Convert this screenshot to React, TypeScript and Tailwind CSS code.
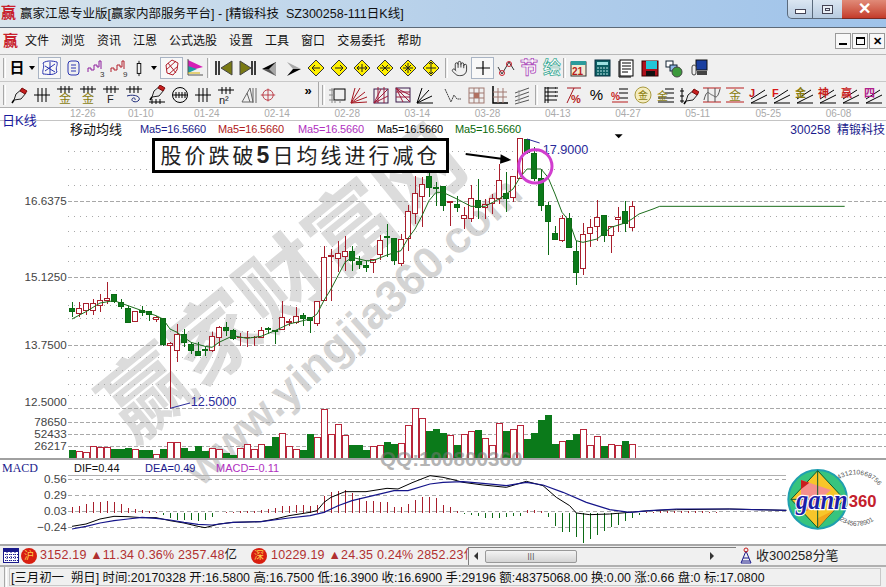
import React from 'react'
import { Hand } from 'lucide-react'

// [high, bodyTop, bodyBottom, low, isRed] in 3x picture coords
const candles: [number, number, number, number, number][] = [
  [518,538,546,565,0],[518,538,552,565,1],[522,524,545,558,1],[510,524,544,558,1],[495,515,528,548,1],[460,508,514,525,1],
  [495,497,517,522,0],[510,520,533,540,0],[530,538,580,582,0],[545,547,578,580,1],[532,545,550,560,0],[545,547,557,575,0],
  [560,566,572,580,1],[566,568,645,652,0],[640,644,650,838,1],[585,615,665,700,1],[600,616,640,655,0],[640,645,665,675,0],
  [638,667,680,680,0],[655,661,665,682,0],[610,622,663,670,1],[590,596,625,650,1],[580,595,605,620,0],[600,604,627,632,0],
  [612,624,626,650,1],[605,624,626,655,1],[620,624,626,652,1],[595,605,624,628,1],[595,597,602,615,0],[603,605,607,645,0],
  [516,566,600,602,1],[570,578,580,590,1],[535,563,580,585,1],[553,559,569,590,0],[565,565,575,612,0],[517,517,584,592,1],
  [352,386,514,516,1],[360,380,382,515,1],[335,374,388,430,1],[320,368,382,425,1],[350,368,395,425,0],[380,397,407,420,0],
  [395,410,415,428,0],[392,392,400,432,1],[318,334,376,392,1],[285,322,325,385,0],[328,328,393,408,0],[315,332,402,412,1],
  [228,247,328,365,1],[140,193,253,285,1],[145,167,202,295,1],[122,142,176,205,0],[160,175,177,232,0],[170,172,230,245,0],
  [215,217,220,290,1],[200,226,236,250,0],[235,260,268,300,1],[168,208,268,280,1],[150,214,236,270,0],[210,226,234,270,1],
  [195,208,224,255,1],[105,153,208,225,1],[130,193,207,250,0],[140,142,206,218,1],[28,28,148,150,1],[30,30,70,75,0],
  [55,72,148,155,0],[120,148,228,245,0],[220,228,278,378,0],[290,312,330,330,0],[258,268,335,338,1],[252,268,354,356,0],
  [335,366,430,468,0],[282,316,418,438,1],[270,296,314,355,1],[213,265,292,335,1],[258,258,320,338,0],[290,292,320,372,1],
  [235,265,272,310,1],[215,246,282,308,0],[215,232,296,305,1],
]

const volumes = [963,966,970,952,956,956,960,960,957,960,963,965,975,962,940,940,957,968,952,968,958,962,972,978,958,946,960,946,953,924,914,953,960,963,917,924,841,916,886,918,948,950,963,952,950,939,945,943,888,838,868,908,900,912,920,948,915,907,903,927,948,883,908,900,888,930,912,875,858,945,937,933,915,900,950,922,953,945,950,938,945]

const maLine = "216,570 258,548 300,522 342,515 384,530 426,545 468,560 489,570 510,600 531,610 552,625 573,640 615,652 636,655 657,640 699,620 741,628 783,622 825,605 867,585 930,570 951,555 972,514 993,480 1014,440 1035,400 1056,385 1098,395 1119,395 1161,378 1203,365 1224,328 1245,300 1266,260 1287,215 1308,190 1329,190 1371,210 1413,232 1455,232 1497,210 1539,180 1560,145 1581,120 1623,120 1644,145 1665,195 1686,250 1707,275 1728,335 1749,340 1791,330 1833,295 1875,282 1896,270 1917,255 1959,240 1979,232 2534,232"

const difLine = "216,232 258,225 300,210 342,202 384,203 426,206 468,206 510,215 552,222 594,232 615,236 657,225 699,220 741,219 783,218 825,210 867,200 930,190 951,185 972,160 993,145 1035,128 1098,128 1161,118 1194,120 1239,100 1290,80 1329,85 1359,92 1389,100 1449,108 1519,115 1579,97 1629,110 1669,145 1709,170 1729,192 1769,197 1829,195 1889,190 1949,185 2029,182 2189,180 2359,184"
const deaLine = "216,240 258,232 300,222 342,215 384,210 426,205 468,208 510,213 552,220 594,226 636,228 699,220 783,218 867,207 930,200 972,190 1014,170 1056,155 1119,140 1182,125 1224,125 1290,105 1329,100 1389,98 1449,103 1519,110 1579,100 1629,108 1689,130 1759,160 1829,182 1889,190 1949,185 2029,180 2189,180 2359,184"

// macd bars, bottom end or top end measured against the 191 zero line
const macdBars = [175,172,165,160,158,157,158,165,178,180,183,186,188,197,207,212,212,214,215,212,205,192,188,189,187,187,185,183,180,178,172,170,168,168,170,168,140,128,126,124,133,147,155,157,160,160,175,175,165,152,144,144,148,168,175,187,195,197,200,206,208,208,204,202,200,183,183,187,205,232,250,250,265,282,270,258,245,235,228,215,207,197,188,188,187,187,187,186,186,187,187,188,188]

const dashedY = [216,445,648,838,880,915,952]
const dottedY = [68,120,170,262,308,352,398,485,528,568,606,686,724,765,798]
const axis: [string, number][] = [['16.6375',216],['15.1250',445],['13.7500',648],['12.5000',820],['78650',880],['52433',915],['26217',952]]
const dates = ['01-10','01-24','02-14','02-28','03-14','03-28','04-13','04-27','05-11','05-25','06-08']
const menus = ['文件','浏览','资讯','江恩','公式选股','设置','工具','窗口','交易委托','帮助']

const Slot = ({ className = 'w-[23px]', sel, children }: { className?: string; sel?: boolean; children: React.ReactNode }) => (
  <div className={`${className} h-[22px] shrink-0 flex items-center justify-center ${sel ? 'bg-[#f8f8f8] border border-[#a9b4c4]' : ''}`}>
    {children}
  </div>
)

const Ico = ({ children }: { children: React.ReactNode }) => (
  <svg width="20" height="20" viewBox="0 0 20 20" fill="none" stroke="#000" strokeWidth="1">{children}</svg>
)

const Grip = ({ className = '' }: { className?: string }) => (
  <div className={`w-[3px] h-[20px] shrink-0 border-l border-[#a8a8a8] border-r border-r-white ${className}`} />
)

const Caret = () => <div className="w-0 h-0 border-x-[3px] border-x-transparent border-t-[4px] border-t-black" />

const Diamond = ({ d }: { d: string }) => (
  <Ico>
    <polygon points="10,2 18,10 10,18 2,10" fill="#fff000" stroke="#333" />
    <path d={d} stroke="#222" />
  </Ico>
)

const Comb = ({ y = 4, color = '#000' }: { y?: number; color?: string }) => (
  <path d={`M2 ${y}H18M6 ${y - 3}V${y + 4}M10 ${y - 3}V${y + 4}M14 ${y - 3}V${y + 4}`} stroke={color} />
)

const Fan = ({ color = '#000' }: { color?: string }) => (
  <path d="M2 18L18 18M2 18L17 11M2 18L14 5M2 18L7 3" stroke={color} />
)

const Angle = ({ label, color }: { label: string; color: string }) => (
  <Ico>
    <path d="M3 18H19M3 18L19 10M3 14L17 5" />
    <text x="1" y="12" fontSize="11" fontWeight="700" fill={color} stroke="none">{label}</text>
  </Ico>
)

const Pen = () => (
  <>
    <polygon points="5,15 7,9 13,4 17,8 12,14" fill="#e8e8e8" stroke="#222" />
    <polygon points="11,6 13,3 18,6 16,9" fill="#c81e1e" stroke="#7a0f0f" />
    <path d="M5 15L3 18" stroke="#000" strokeWidth="1.5" />
  </>
)

const row1 = (
  <>
    <Grip className="ml-[3px]" />
    <Slot className="w-[22px]"><span className="text-[15px] font-bold text-black">日</span></Slot>
    <Slot className="w-[8px]"><Caret /></Slot>
    <div className="w-[2px] shrink-0" />
    <Slot sel><Ico><path d="M3 5C7 2 13 3 17 4C18 8 15 9 17 14C13 18 7 16 3 16C2 12 5 9 3 5ZM5 8L15 14M15 6L5 13M10 4V16" stroke="#2a35b0" /></Ico></Slot>
    <Slot><Ico><rect x="5" y="3" width="11" height="14" rx="3" stroke="#2a35b0" /><path d="M8 7H13M8 10H13M8 13H13" stroke="#2a35b0" /></Ico></Slot>
    <Slot><Ico><path d="M2 14V10H5V12H8V7H11V9H13V3H15V11" stroke="#8e1f9e" /><text x="14" y="19" fontSize="8" fill="#333" stroke="none">3</text></Ico></Slot>
    <Slot><Ico><path d="M2 14V10H5V12H8V7H11V9H13V3H15V11" stroke="#b3202c" /><text x="14" y="19" fontSize="8" fill="#333" stroke="none">9</text></Ico></Slot>
    <Slot className="w-[18px]"><Ico><rect x="8" y="5" width="4" height="11" /><path d="M10 2V5M10 16V19" /></Ico></Slot>
    <Slot className="w-[12px]"><Caret /></Slot>
    <Slot sel><Ico><path d="M4 7L10 2L16 5L15 12L11 17L5 15ZM4 12L14 3M7 16L16 8M6 5L14 15" stroke="#b3202c" /></Ico></Slot>
    <Slot className="w-[24px]"><Ico><polygon points="3,2 18,9 3,13" fill="#d61fb5" stroke="none" /><polygon points="3,8 12,11 3,15" fill="#1c9ca0" stroke="none" /><path d="M3 1V17H18" stroke="#555" /><path d="M3 15H15" stroke="#d8b000" /></Ico></Slot>
    <Grip />
    <div className="w-[2px] shrink-0" />
    <Slot><Ico><path d="M2 3V17M5 3V17" strokeWidth="1.5" /><polygon points="18,3 7,10 18,17" fill="#7a7a14" stroke="#444" /></Ico></Slot>
    <Slot><Ico><polygon points="3,3 14,10 3,17" fill="#7a7a14" stroke="#444" /><path d="M15 3V17M18 3V17" strokeWidth="1.5" /></Ico></Slot>
    <Slot><Ico><polygon points="2,11 16,4 16,11" fill="#000" stroke="none" /><polygon points="2,11 16,11 16,18" fill="#555" stroke="none" /><polygon points="9,11 16,4 16,18" fill="#a8a8a8" stroke="none" /></Ico></Slot>
    <Slot><Ico><polygon points="18,11 4,4 10,11" fill="#a8a8a8" stroke="none" /><polygon points="18,11 4,18 10,11" fill="#000" stroke="none" /></Ico></Slot>
    <Slot><Diamond d="M14 10H6M9 7L6 10L9 13" /></Slot>
    <Slot><Diamond d="M6 10H14M11 7L14 10L11 13" /></Slot>
    <Slot><Diamond d="M5 10H15M7 8L5 10L7 12M13 8L15 10L13 12M10 6V14" /></Slot>
    <Slot><Diamond d="M5 10H15M7 7L10 10L7 13M13 7L10 10L13 13" /></Slot>
    <Slot><Diamond d="M5 10H15M10 5V15M7 7L13 13M13 7L7 13" /></Slot>
    <Slot><Diamond d="M10 4V16M8 6L10 4L12 6M8 14L10 16L12 14M5 10H15" /></Slot>
    <Grip className="ml-[3px]" />
    <Slot className="w-[23px]"><Hand size={17} strokeWidth={1.2} color="#222" /></Slot>
    <Slot sel><Ico><path d="M10 3V17M3 10H17" strokeWidth="1.2" /></Ico></Slot>
    <Slot><Ico><path d="M2 9L6 16L13 4L18 12" stroke="#333" /><circle cx="6" cy="15" r="2.5" stroke="#c81e2c" /><circle cx="13" cy="6" r="2.5" stroke="#c81e2c" /></Ico></Slot>
    <Slot><Ico><text x="1" y="16" fontSize="18" fontWeight="700" fill="#fff" stroke="#a12bb0" strokeWidth="0.7">节</text></Ico></Slot>
    <Slot><Ico><text x="1" y="16" fontSize="18" fontWeight="700" fill="#fff" stroke="#2fa58f" strokeWidth="0.7">绘</text></Ico></Slot>
    <Grip />
    <Slot className="w-[24px]"><Ico><rect x="3" y="4" width="15" height="14" fill="#f3ead2" stroke="#333" /><rect x="3" y="3" width="15" height="4" fill="#2b9b9b" stroke="none" /><text x="4" y="17" fontSize="10" fontWeight="700" fill="#b81c1c" stroke="none">21</text></Ico></Slot>
    <Slot className="w-[24px]"><Ico><rect x="3" y="2" width="15" height="16" fill="#0b5f63" stroke="#0a2e40" /><rect x="5" y="4" width="11" height="3" fill="#9ce0e0" stroke="none" /><path d="M5 10H16M5 13H16M5 16H16" stroke="#bfe8e8" strokeDasharray="2 1" /></Ico></Slot>
    <Slot className="w-[24px]"><Ico><rect x="4" y="2" width="13" height="16" fill="#fff" /><path d="M6 5H15M6 8H15M6 11H15M6 14H12" /><path d="M3 3V19H15" /></Ico></Slot>
    <Slot className="w-[24px]"><Ico><rect x="2" y="3" width="16" height="15" fill="#b0101c" stroke="#300" /><rect x="6" y="3" width="11" height="8" fill="#22c6d8" stroke="none" /><rect x="6" y="13" width="9" height="5" fill="#111" stroke="none" /></Ico></Slot>
    <Slot><Ico><rect x="2" y="3" width="7" height="6" fill="#fff" stroke="#123" /><rect x="6" y="7" width="7" height="6" fill="#8fb8e8" stroke="#123" /><circle cx="13" cy="14" r="5" fill="#3c9a3c" stroke="#444" /></Ico></Slot>
    <Slot className="w-[27px]"><Ico><rect x="7" y="2" width="11" height="10" fill="#1a3fa0" stroke="#111" /><rect x="3" y="7" width="4" height="10" rx="2" fill="#eee" stroke="#444" /><rect x="8" y="13" width="10" height="4" fill="#444" stroke="none" /></Ico></Slot>
  </>
)

const row2 = (
  <>
    <Grip className="ml-[3px]" />
    <div className="w-[1px] shrink-0" />
    <Slot><Ico><Pen /></Ico></Slot>
    <Slot><Ico><path d="M2 10H18M6 3V17M10 3V17M14 3V17" /></Ico></Slot>
    <Slot><Ico><Comb /><text x="4" y="18" fontSize="12" fill="#8a7d10" stroke="none">金</text></Ico></Slot>
    <Slot><Ico><Comb /><text x="4" y="18" fontSize="12" fill="#8a7d10" stroke="none">金</text></Ico></Slot>
    <Slot><Ico><Comb /><text x="6" y="18" fontSize="11" fill="#222" stroke="none">F</text></Ico></Slot>
    <Slot><Ico><Comb /><path d="M3 11C9 9 17 11 15 15C13 18 7 17 8 14C9 12 12 13 11 15" stroke="#1c2a7a" /></Ico></Slot>
    <Slot><Ico><g transform="translate(0 -3)"><Pen /></g><path d="M2 17H18M5 14V19M9 14V19M13 14V19" /></Ico></Slot>
    <Slot><Ico><circle cx="10" cy="10" r="7.5" /><path d="M3 10H17M6 7V13M9 7V13M12 7V13M15 7V13" /></Ico></Slot>
    <Slot><Ico><path d="M2 10H18M6 3V17M10 3V17M14 3V17" /></Ico></Slot>
    <Slot><Ico><Comb y={5} /><text x="3" y="19" fontSize="11" fill="#222" stroke="none">n²</text></Ico></Slot>
    <Slot><Ico><path d="M11 3L3 17H14ZM8 8L11 17M14 3V18M17 3V18" stroke="#666" /></Ico></Slot>
    <Slot className="w-[16px]"><Ico><circle cx="10" cy="10" r="6.5" stroke="#b3202c" /><path d="M1 10H19M10 2V18" stroke="#b3202c" /></Ico></Slot>
    <div className="w-[22px] shrink-0" />
    <Slot className="w-[20px]"><span className="text-[13px] font-bold text-black -mt-2">»</span></Slot>
    <div className="w-[4px] shrink-0 h-[26px] border-l border-[#a8a8a8]" />
    <Grip />
    <div className="w-[1px] shrink-0" />
    <Slot className="w-[22px]"><Ico><rect x="7" y="4" width="11" height="11" /><path d="M2 5H7M2 10H7M2 15H7M5 3V18M8 15V18M13 15V18" stroke="#888" /></Ico></Slot>
    <Slot className="w-[22px]"><Ico><path d="M2 18L18 17M2 18L18 12M2 18L16 7M2 18L11 3M2 18L6 3" stroke="#a51620" /></Ico></Slot>
    <Slot className="w-[22px]"><Ico><rect x="3" y="4" width="14" height="14" stroke="#3a1a4a" /><path d="M3 18L17 11M3 18L17 4M3 18L10 4M7 2V18M13 2V18" stroke="#9c1a3a" /></Ico></Slot>
    <Slot className="w-[22px]"><Ico><rect x="3" y="3" width="14" height="14" stroke="#3a1a4a" /><path d="M3 3L17 10M3 3L17 17M3 3L10 17M3 7H17M3 12H17" stroke="#9c1a3a" /></Ico></Slot>
    <Slot className="w-[22px]"><Ico><Fan /></Ico></Slot>
    <div className="w-[5px] shrink-0" />
    <Slot><Ico><path d="M2 4L8 17L11 10L14 14L18 14" stroke="#444" strokeDasharray="2 0.5" /></Ico></Slot>
    <Slot><Ico><rect x="3" y="3" width="15" height="15" stroke="#a07870" /><path d="M3 8H18M3 13H18M8 3V18M13 3V18" stroke="#a07870" /><rect x="8" y="8" width="5" height="5" fill="#b07060" stroke="none" /></Ico></Slot>
    <Slot><Ico><path d="M4 1V18H19M4 18" stroke="#000" strokeWidth="1.5" /><path d="M4 7H18M4 12H18M9 3V18M14 3V18" stroke="#a07870" /></Ico></Slot>
    <Slot><Ico><path d="M3 8L17 3M3 12L17 7M3 16L17 11M3 19L17 15" stroke="#555" /><path d="M7 5V18" stroke="#999" /></Ico></Slot>
    <div className="w-[2px] shrink-0" />
    <Grip />
    <div className="w-[1px] shrink-0" />
    <Slot><Ico><path d="M4 2V18M4 3H16M4 7H16M4 11H16M4 15H16M7 2V18" /><path d="M14 3H18M14 7H18M14 11H18" strokeDasharray="1 1" /></Ico></Slot>
    <Slot><Ico><path d="M3 3H17M10 3L3 18" stroke="#a51620" /><text x="7" y="18" fontSize="11" fontWeight="700" fill="#b81c1c" stroke="none">%</text></Ico></Slot>
    <Slot><span className="text-[15px] leading-none text-black">%</span></Slot>
    <Slot><Ico><path d="M9 4H18M9 8H18M9 13H18" /><path d="M2 17H18" stroke="#b81c1c" /><text x="1" y="15" fontSize="10" fontWeight="700" fill="#c81e1e" stroke="none">%</text></Ico></Slot>
    <Slot><Ico><circle cx="10" cy="10" r="8" fill="#f4ecc0" stroke="#a89a40" /><text x="5" y="14" fontSize="10" fill="#8a7d10" stroke="none">金</text></Ico></Slot>
    <Slot><Ico><path d="M9 4H18M9 8H18M2 13H18M2 17H18" /><text x="1" y="15" fontSize="11" fill="#8a7d10" stroke="none">金</text></Ico></Slot>
    <Slot><Ico><path d="M3 3V18M1 6H5M1 11H5M1 16H5" /><g transform="translate(2 1)"><Pen /></g></Ico></Slot>
    <Slot><Ico><path d="M1 3H19M1 17H19" stroke="#b81c1c" /><path d="M2 15C5 3 7 9 10 10C13 11 15 16 18 4M6 3V17M13 3V17" stroke="#555" /></Ico></Slot>
    <Slot><Ico><path d="M1 3H19M1 17H19" stroke="#b81c1c" /><text x="4" y="15" fontSize="12" fill="#8a7d10" stroke="none">金</text></Ico></Slot>
    <Slot><Angle label="J" color="#c81e1e" /></Slot>
    <Slot><Angle label="F" color="#d81818" /></Slot>
    <Slot><Angle label="金" color="#8a7d10" /></Slot>
    <Slot><Angle label="神" color="#c81e1e" /></Slot>
    <Slot><Angle label="赢" color="#c81e1e" /></Slot>
    <Slot><Angle label="四" color="#b0208a" /></Slot>
  </>
)

const GannLogo = () => (
  <svg className="absolute right-0 top-0 w-[110px] h-[85px]" viewBox="0 0 330 255">
    <defs>
      <path id="digitsTop" d="M180 66A88 88 0 0 1 326 118" />
      <path id="digitsBottom" d="M190 180A88 88 0 0 0 326 140" />
    </defs>
    <text fontSize="20" fill="#555"><textPath href="#digitsTop">5431210668756</textPath></text>
    <text fontSize="20" fill="#555"><textPath href="#digitsBottom">2345678901</textPath></text>
    <circle cx="125" cy="118" r="88" fill="#37c47e" stroke="#1f9fb0" strokeWidth="6" />
    <polygon points="125,32 205,118 125,204 45,118" fill="#f7c62a" stroke="#0b5a30" strokeWidth="3" />
    <polygon points="75,60 165,90 75,165" fill="#f4908c" />
    <polygon points="75,60 100,68 75,88" fill="#c81e1e" />
    <polygon points="75,165 95,150 75,140" fill="#c81e1e" />
    <polygon points="175,150 125,204 125,175" fill="#f2a71c" />
    <path d="M125 32V204M45 118H205" stroke="#0b5a30" strokeWidth="3" />
    <text x="60" y="148" fontSize="84" fontStyle="italic" fontWeight="700" textLength="155" lengthAdjust="spacingAndGlyphs" fill="#1c1ea8" stroke="#fff" strokeWidth="7" paintOrder="stroke" className="font-['Liberation_Serif',serif]">gann</text>
    <text x="218" y="140" fontSize="50" fontWeight="700" fill="#c4202c" className="font-['Liberation_Sans',sans-serif]">360</text>
  </svg>
)

const App = () => {
  return (
    <div className="w-[886px] h-[587px] overflow-hidden flex flex-col bg-white font-['Liberation_Sans','Noto_Sans_CJK_SC',sans-serif] text-black">
      {/* title bar */}
      <div className="h-[28px] shrink-0 flex items-start bg-gradient-to-r from-[#d7e4ec] via-[#b6d0ea] to-[#9fc3ea] border-b border-[#5d6a78]">
        <span className="ml-[1px] mt-[4px] w-[18px] text-[15px] leading-[18px] font-bold text-[#c8202c]">赢</span>
        <span className="ml-[1px] mt-[5px] text-[12.5px] leading-[18px] text-[#111] whitespace-pre">赢家江恩专业版[赢家内部服务平台] - [精锻科技  SZ300258-111日K线]</span>
        <div className="ml-auto flex h-[19px]">
          <div className="w-[26px] flex items-center justify-center rounded-bl-[5px] border border-t-0 border-[#5a6a7c] bg-gradient-to-b from-[#dbe6f2] to-[#b7cbe0]">
            <div className="w-[11px] h-[5px] mt-[4px] border border-[#445] bg-white" />
          </div>
          <div className="w-[29px] flex items-center justify-center border-b border-[#5a6a7c] bg-gradient-to-b from-[#dbe6f2] to-[#b7cbe0]">
            <div className="w-[11px] h-[9px] border border-[#445] bg-[#e8eef5] flex items-center justify-center">
              <div className="w-[5px] h-[3px] border border-[#445]" />
            </div>
          </div>
          <div className="w-[44px] flex items-center justify-center text-[16px] font-bold leading-none text-white border-b border-[#7a2a24] bg-gradient-to-b from-[#e08a78] to-[#c43a2a]">✕</div>
        </div>
      </div>

      {/* menu */}
      <div className="h-[27px] shrink-0 flex items-center bg-[#f0f0f0] border-b border-[#b8b8b8]">
        <span className="ml-[3px] w-[22px] text-[15px] font-bold text-[#c8202c]">赢</span>
        <div className="flex gap-3 text-[12px] text-[#111]">
          {menus.map((m) => <span key={m}>{m}</span>)}
        </div>
        <div className="ml-auto mr-[1px] flex gap-[1px]">
          <div className="w-[16px] h-[16px] flex items-end justify-center pb-[3px] bg-[#f8f8f8] border border-[#999]"><div className="w-[8px] h-[2px] bg-black" /></div>
          <div className="w-[16px] h-[16px] flex items-center justify-center bg-[#f8f8f8] border border-[#999]"><div className="w-[9px] h-[8px] border border-black border-t-2" /></div>
          <div className="w-[16px] h-[16px] flex items-center justify-center bg-[#f8f8f8] border border-[#999] text-[11px] font-bold leading-none">✕</div>
        </div>
      </div>

      {/* toolbars */}
      <div className="h-[27px] shrink-0 flex items-center bg-[#f0f0f0] border-b border-[#c8c8c8]">{row1}</div>
      <div className="h-[26px] shrink-0 flex items-center bg-[#f0f0f0] border-b border-[#b0b0b0] overflow-hidden">{row2}</div>

      {/* k line chart */}
      <div className="relative h-[350px] shrink-0 bg-white">
        <svg className="absolute inset-0 overflow-visible" width="886" height="350" viewBox="0 -63 2658 1050">
          <g fontWeight="700" fill="#dcdcdc" className="font-['Noto_Sans_CJK_SC',sans-serif]">
            <text x="850" y="555" fontSize="262" textAnchor="middle" transform="rotate(-39 850 465)">赢家财富网</text>
            <text x="1060" y="650" fontSize="134" textAnchor="middle" fill="#d4d4d4" className="font-['Liberation_Sans',sans-serif]" transform="rotate(-42 1060 606)">www.yingjia360.com</text>
          </g>
          <g shapeRendering="crispEdges">
            {dottedY.map((y) => <line key={y} x1="205" x2="2658" y1={y} y2={y} stroke="#a8a8a8" strokeWidth="3" strokeDasharray="3 15" />)}
            {dashedY.map((y) => <line key={y} x1="205" x2="2658" y1={y} y2={y} stroke="#a8a8a8" strokeWidth="3" strokeDasharray="12 6" />)}
            {volumes.map((top, i) => {
              const x = 216 + 21 * i
              const red = candles[i][4] === 1
              return <rect key={i} x={x - 9} y={top} width="18" height={988 - top} fill={red ? '#fff' : '#0b7a1a'} stroke={red ? '#b8263a' : '#0b7a1a'} strokeWidth="3" />
            })}
            {candles.map(([h, t, b, l, red], i) => {
              const x = 216 + 21 * i
              const c = red ? '#a81e2c' : '#0b6a14'
              return (
                <g key={i}>
                  <line x1={x} x2={x} y1={h} y2={l} stroke={c} strokeWidth="3" />
                  <rect x={x - 8} y={t} width="16" height={b - t} fill={red ? '#fff' : '#0b7a1a'} stroke={c} strokeWidth="3" />
                </g>
              )
            })}
          </g>
          {axis.map(([t, y]) => <text key={t} x="200" y={y + 11} textAnchor="end" fontSize="35" fill="#444">{t}</text>)}
          <polyline points={maLine} fill="none" stroke="#1d6e1d" strokeWidth="3" />
          <path d="M510 838L570 822" stroke="#2a2a9a" strokeWidth="3" />
          <text x="572" y="832" fontSize="38" fill="#2a2a9a">12.5000</text>
          <path d="M1581 30L1619 42" stroke="#2a2a9a" strokeWidth="3" />
          <text x="1628" y="76" fontSize="38" fill="#2a2a9a">17.9000</text>
          <polygon points="1844,16 1868,16 1856,28" fill="#000" />
          <path d="M1397 75L1510 90" stroke="#000" strokeWidth="6" />
          <polygon points="1502,76 1534,93 1500,104" fill="#000" />
          <circle cx="1606" cy="112" r="50" fill="none" stroke="#d13ecf" strokeWidth="9" />
          <text x="1140" y="1011" fontSize="62" fontWeight="700" fill="#777" opacity="0.55">QQ:100800360</text>
        </svg>

        <div className="relative">
          <div className="h-[13px] flex items-start border-b border-[#c4c4c4] text-[10px] leading-[12px] text-[#aaa] whitespace-nowrap">
            <span className="ml-[70px] w-[30px]">12-26</span>
            <span className="ml-[28px] w-[32px]">01-10</span>
            <div className="flex ml-[6px]">
              {dates.slice(1).map((d) => <span key={d} className="w-[70.2px] pl-[28px]">{d}</span>)}
            </div>
          </div>
          <div className="h-[17px] flex items-center text-[11px] tracking-[-0.15px] leading-none">
            <span className="ml-[2px] w-[68px] text-[13px] tracking-normal text-[#1a1a9c] -mt-[18px]">日K线</span>
            <span className="w-[70px] text-[13px] tracking-normal text-[#111]">移动均线</span>
            <span className="w-[78px] text-[#1a1a8c]">Ma5=16.5660</span>
            <span className="w-[80px] text-[#b02020]">Ma5=16.5660</span>
            <span className="w-[79px] text-[#b030c0]">Ma5=16.5660</span>
            <span className="w-[78px] text-black">Ma5=16.5660</span>
            <span className="text-[#0a6a0a]">Ma5=16.5660</span>
            <span className="ml-auto pr-[1px] text-[12px] tracking-normal text-[#1a1a8c] whitespace-pre">300258  精锻科技</span>
          </div>
        </div>

        {/* annotation box */}
        <div className="absolute left-[152px] top-[30px] w-[297px] h-[35px] flex items-center justify-center border-[3px] border-black bg-white text-[21px] tracking-[3px] text-[#222] whitespace-nowrap">
          股价跌破<b className="font-['Liberation_Sans'] text-[23px]">5</b>日均线进行减仓
        </div>
      </div>

      {/* macd */}
      <div className="relative h-[86px] shrink-0 border-t-2 border-[#a0a0a0]">
        <svg className="absolute inset-0" width="886" height="84" viewBox="0 33 2658 252">
          <g shapeRendering="crispEdges">
            <line x1="205" x2="2359" y1="78" y2="78" stroke="#b0b0b0" strokeWidth="3" />
            {[90, 138, 187, 235].map((y) => <line key={y} x1="205" x2="2359" y1={y} y2={y} stroke="#aaa" strokeWidth="3" strokeDasharray="12 9" />)}
            {macdBars.map((y, i) => {
              const x = 216 + 21 * i
              return <line key={i} x1={x} x2={x} y1="191" y2={y} stroke={y < 191 ? '#a81e2c' : '#0b6a14'} strokeWidth="3" />
            })}
          </g>
          <text x="200" y="101" textAnchor="end" fontSize="35" fill="#444">0.56</text>
          <text x="200" y="149" textAnchor="end" fontSize="35" fill="#444">0.29</text>
          <text x="200" y="198" textAnchor="end" fontSize="35" fill="#444">0.03</text>
          <text x="200" y="246" textAnchor="end" fontSize="35" fill="#444">−0.24</text>
          <polyline points={difLine} fill="none" stroke="#000" strokeWidth="3" />
          <polyline points={deaLine} fill="none" stroke="#15158a" strokeWidth="3.5" />
        </svg>
        <div className="relative h-[16px] flex items-center text-[11px]">
          <span className="ml-[2px] w-[72px] text-[12px] font-['Liberation_Serif',serif] text-[#1a1a8c]">MACD</span>
          <span className="w-[71px] text-[#111]">DIF=0.44</span>
          <span className="w-[71px] text-[#1a1a8c]">DEA=0.49</span>
          <span className="text-[#b030c0]">MACD=-0.11</span>
        </div>
        <GannLogo />
      </div>

      {/* index strip */}
      <div className="h-[21px] shrink-0 flex items-center bg-[#f0f0f0] border-t-2 border-[#a8a8a8] text-[12.5px] tracking-[0.2px] text-[#b03030] whitespace-pre overflow-hidden">
        <svg className="ml-[3px] shrink-0" width="16" height="15" viewBox="0 0 16 15" fill="#fff" stroke="#1a1a8c">
          <rect x="0.5" y="0.5" width="15" height="14" />
          <rect x="0.5" y="0.5" width="15" height="3" fill="#1a1a8c" />
          <path d="M0 6.5H16M0 9.5H16M0 12.5H16M4 4V15M8 4V15M12 4V15" strokeDasharray="1 1" />
        </svg>
        <span className="ml-[2px] w-[16px] h-[16px] shrink-0 rounded-full bg-[#d81e10] text-[10px] leading-[16px] text-center text-[#ffd24a]">沪</span>
        <span className="ml-[3px] w-[211px] shrink-0">3152.19 ▲11.34 0.36% 2357.48<span className="text-[#222]">亿</span></span>
        <span className="w-[16px] h-[16px] shrink-0 rounded-full bg-[#d81e10] text-[10px] leading-[16px] text-center text-[#ffd24a]">深</span>
        <span className="ml-[4px] w-[197px] shrink-0 overflow-hidden">10229.19 ▲24.35 0.24% 2852.23亿</span>
        <div className="w-[268px] h-[18px] shrink-0 flex items-center border-t border-l border-[#808080] bg-[#f0f0f0]">
          <div className="ml-[5px] w-0 h-0 border-y-[4px] border-y-transparent border-r-[4px] border-r-[#333]" />
          <div className="ml-[7px] w-[92px] h-[13px] flex items-center justify-center rounded-[2px] border border-[#999] bg-gradient-to-b from-[#f4f4f4] to-[#d4d4d4] text-[8px] leading-none text-[#444]">|||</div>
          <div className="ml-[133px] w-0 h-0 border-y-[4px] border-y-transparent border-l-[4px] border-l-[#333]" />
        </div>
        <svg className="ml-[3px] shrink-0" width="14" height="17" viewBox="0 0 14 17" fill="none" stroke="#1a1a8c">
          <path d="M7 4L2 16H12ZM4 11H10M3 14H11" />
          <circle cx="7" cy="3" r="2" stroke="#c81e1e" />
        </svg>
        <span className="ml-[3px] text-[13px] tracking-normal text-[#222]">收300258分笔</span>
      </div>

      {/* status bar */}
      <div className="flex-1 flex items-center bg-[#f0f0f0] border-t-2 border-[#b0b0b0] text-[12.4px] text-[#111] whitespace-pre">
        <Grip className="ml-[4px]" />
        <div className="ml-[2px] flex-1 mr-[5px] h-[18px] leading-[18px] border border-[#c8c8c8] pl-[1px]">
          [三月初一  朔日] 时间:20170328 开:16.5800 高:16.7500 低:16.3900 收:16.6900 手:29196 额:48375068.00 换:0.00 涨:0.66 盘:0 标:17.0800
        </div>
      </div>
    </div>
  )
}

export default App
